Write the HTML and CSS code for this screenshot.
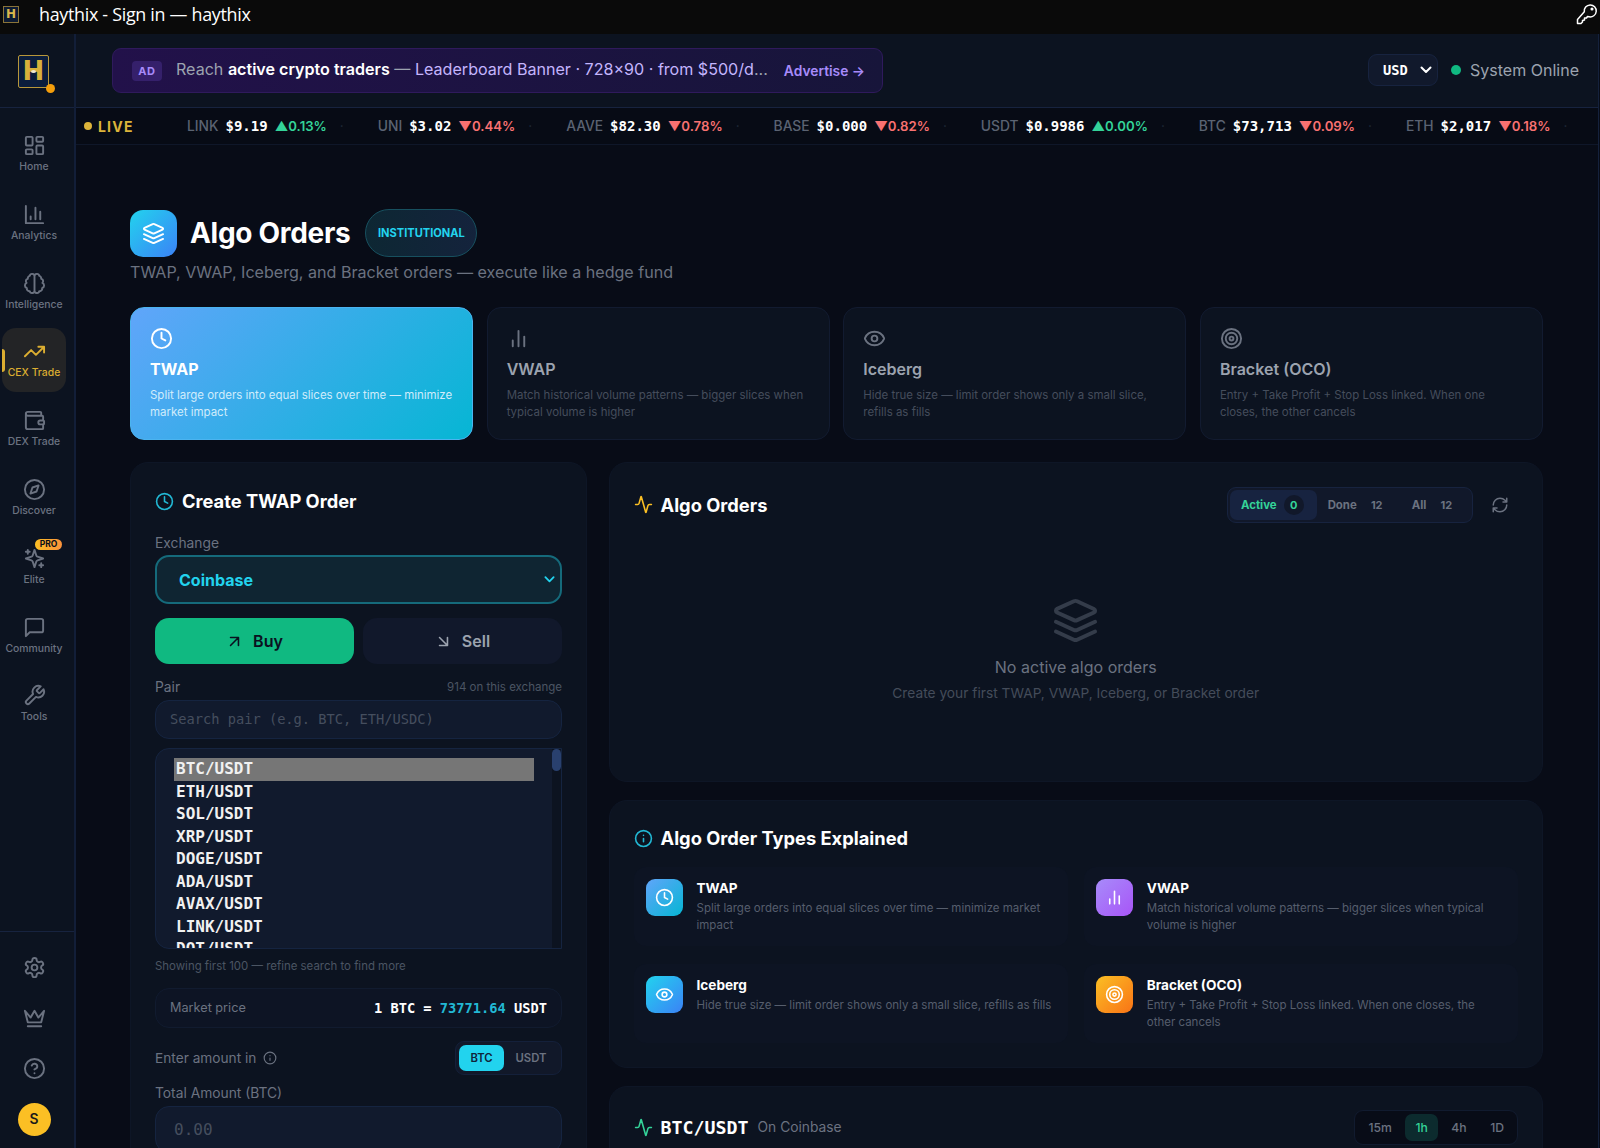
FILE: index.html
```html
<!DOCTYPE html>
<html lang="en">
<head>
  <meta charset="UTF-8">
  <title>haythix - Sign in — haythix</title>
  <link rel="stylesheet" href="styles.css">
</head>
<body>

  <!-- Icon set -->
  <svg class="icon-defs">
    <symbol id="i-home" viewBox="0 0 24 24"><rect x="3" y="3" width="7" height="9" rx="1"/><rect x="14" y="3" width="7" height="5" rx="1"/><rect x="14" y="12" width="7" height="9" rx="1"/><rect x="3" y="16" width="7" height="5" rx="1"/></symbol>
    <symbol id="i-chart" viewBox="0 0 24 24"><path d="M3 3v18h18M18 17V9M13 17V5M8 17v-3"/></symbol>
    <symbol id="i-brain" viewBox="0 0 24 24"><path d="M12 4.5a2.5 2.5 0 0 0-4.96-.46 2.5 2.5 0 0 0-1.98 3 2.5 2.5 0 0 0-1.32 4.24 3 3 0 0 0 .34 5.58 2.5 2.5 0 0 0 2.96 3.08A2.5 2.5 0 0 0 12 19.5a2.5 2.5 0 0 0 4.96.44 2.5 2.5 0 0 0 2.96-3.08 3 3 0 0 0 .34-5.58 2.5 2.5 0 0 0-1.32-4.24 2.5 2.5 0 0 0-1.98-3A2.5 2.5 0 0 0 12 4.5v15"/></symbol>
    <symbol id="i-trend" viewBox="0 0 24 24"><path d="M22 7l-8.5 8.5-5-5L2 17M16 7h6v6"/></symbol>
    <symbol id="i-wallet" viewBox="0 0 24 24"><path d="M19 7V4a1 1 0 0 0-1-1H5a2 2 0 0 0 0 4h15a1 1 0 0 1 1 1v4h-3a2 2 0 0 0 0 4h3a1 1 0 0 0 1-1v-2a1 1 0 0 0-1-1"/><path d="M3 5v14a2 2 0 0 0 2 2h15a1 1 0 0 0 1-1v-4"/></symbol>
    <symbol id="i-compass" viewBox="0 0 24 24"><circle cx="12" cy="12" r="10"/><path d="M16.24 7.76l-2.12 6.36-6.36 2.12 2.12-6.36z"/></symbol>
    <symbol id="i-sparkles" viewBox="0 0 24 24"><path d="m12 3-1.912 5.813a2 2 0 0 1-1.275 1.275L3 12l5.813 1.912a2 2 0 0 1 1.275 1.275L12 21l1.912-5.813a2 2 0 0 1 1.275-1.275L21 12l-5.813-1.912a2 2 0 0 1-1.275-1.275L12 3ZM5 3v4M19 17v4M3 5h4M17 19h4"/></symbol>
    <symbol id="i-message" viewBox="0 0 24 24"><path d="M21 15a2 2 0 0 1-2 2H7l-4 4V5a2 2 0 0 1 2-2h14a2 2 0 0 1 2 2z"/></symbol>
    <symbol id="i-wrench" viewBox="0 0 24 24"><path d="M14.7 6.3a1 1 0 0 0 0 1.4l1.6 1.6a1 1 0 0 0 1.4 0l3.77-3.77a6 6 0 0 1-7.94 7.94l-6.91 6.91a2.12 2.12 0 0 1-3-3l6.91-6.91a6 6 0 0 1 7.94-7.94l-3.76 3.76z"/></symbol>
    <symbol id="i-settings" viewBox="0 0 24 24"><path d="M12.22 2h-.44a2 2 0 0 0-2 2v.18a2 2 0 0 1-1 1.73l-.43.25a2 2 0 0 1-2 0l-.15-.08a2 2 0 0 0-2.73.73l-.22.38a2 2 0 0 0 .73 2.73l.15.1a2 2 0 0 1 1 1.72v.51a2 2 0 0 1-1 1.74l-.15.09a2 2 0 0 0-.73 2.73l.22.38a2 2 0 0 0 2.73.73l.15-.08a2 2 0 0 1 2 0l.43.25a2 2 0 0 1 1 1.73V20a2 2 0 0 0 2 2h.44a2 2 0 0 0 2-2v-.18a2 2 0 0 1 1-1.73l.43-.25a2 2 0 0 1 2 0l.15.08a2 2 0 0 0 2.73-.73l.22-.39a2 2 0 0 0-.73-2.73l-.15-.08a2 2 0 0 1-1-1.74v-.5a2 2 0 0 1 1-1.74l.15-.09a2 2 0 0 0 .73-2.73l-.22-.38a2 2 0 0 0-2.73-.73l-.15.08a2 2 0 0 1-2 0l-.43-.25a2 2 0 0 1-1-1.73V4a2 2 0 0 0-2-2z"/><circle cx="12" cy="12" r="3"/></symbol>
    <symbol id="i-crown" viewBox="0 0 24 24"><path d="m2 4 3 12h14l3-12-6 7-4-7-4 7-6-7zM5 20h14"/></symbol>
    <symbol id="i-help" viewBox="0 0 24 24"><circle cx="12" cy="12" r="10"/><path d="M9.09 9a3 3 0 0 1 5.83 1c0 2-3 3-3 3M12 17h.01"/></symbol>
    <symbol id="i-info" viewBox="0 0 24 24"><circle cx="12" cy="12" r="10"/><path d="M12 16v-4M12 8h.01"/></symbol>
    <symbol id="i-clock" viewBox="0 0 24 24"><circle cx="12" cy="12" r="10"/><path d="M12 6v6l4 2"/></symbol>
    <symbol id="i-bars" viewBox="0 0 24 24"><path d="M18 20V10M12 20V4M6 20v-6"/></symbol>
    <symbol id="i-eye" viewBox="0 0 24 24"><path d="M2.062 12.348a1 1 0 0 1 0-.696 10.75 10.75 0 0 1 19.876 0 1 1 0 0 1 0 .696 10.75 10.75 0 0 1-19.876 0"/><circle cx="12" cy="12" r="3"/></symbol>
    <symbol id="i-target" viewBox="0 0 24 24"><circle cx="12" cy="12" r="10"/><circle cx="12" cy="12" r="6"/><circle cx="12" cy="12" r="2"/></symbol>
    <symbol id="i-layers" viewBox="0 0 24 24"><path d="m12.83 2.18a2 2 0 0 0-1.66 0L2.6 6.08a1 1 0 0 0 0 1.83l8.58 3.91a2 2 0 0 0 1.66 0l8.58-3.9a1 1 0 0 0 0-1.83Z"/><path d="m22 17.65-9.17 4.16a2 2 0 0 1-1.66 0L2 17.65M22 12.65l-9.17 4.16a2 2 0 0 1-1.66 0L2 12.65"/></symbol>
    <symbol id="i-activity" viewBox="0 0 24 24"><path d="M22 12h-2.48a2 2 0 0 0-1.93 1.46l-2.35 8.36a.25.25 0 0 1-.48 0L9.24 2.18a.25.25 0 0 0-.48 0l-2.35 8.36A2 2 0 0 1 4.49 12H2"/></symbol>
    <symbol id="i-refresh" viewBox="0 0 24 24"><path d="M3 12a9 9 0 0 1 9-9 9.75 9.75 0 0 1 6.74 2.74L21 8M21 3v5h-5M21 12a9 9 0 0 1-9 9 9.75 9.75 0 0 1-6.74-2.74L3 16M8 16H3v5"/></symbol>
    <symbol id="i-up" viewBox="0 0 24 24"><path d="M7 7h10v10M7 17 17 7"/></symbol>
    <symbol id="i-down" viewBox="0 0 24 24"><path d="m7 7 10 10M17 7v10H7"/></symbol>
    <symbol id="i-chevron" viewBox="0 0 12 12"><path d="M1.5 3.5 6 8l4.5-4.5"/></symbol>
    <symbol id="i-key" viewBox="0 0 22 22"><path d="M8.3 8.8A6 6 0 1 1 13 13.8L11.500 13.500 10.500 15H8.500V17L6.500 17.500V19L5 20.500H1.500V16.500Z"/><circle cx="16" cy="6" r=".8"/></symbol>
  </svg>

  <!-- Window title -->
  <div class="titlebar">
    <span class="fav">H</span>
    <span class="window-title">haythix - Sign in — haythix</span>
    <svg class="icon key"><use href="#i-key"/></svg>
  </div>

  <div class="shell">

    <aside class="sidebar">
      <div class="brand"><div class="logo">H<i></i></div></div>
      <nav class="menu">
        <a class="menu-item"><svg class="icon"><use href="#i-home"/></svg>Home</a>
        <a class="menu-item"><svg class="icon"><use href="#i-chart"/></svg>Analytics</a>
        <a class="menu-item"><svg class="icon"><use href="#i-brain"/></svg>Intelligence</a>
        <a class="menu-item active"><svg class="icon"><use href="#i-trend"/></svg>CEX Trade</a>
        <a class="menu-item"><svg class="icon"><use href="#i-wallet"/></svg>DEX Trade</a>
        <a class="menu-item"><svg class="icon"><use href="#i-compass"/></svg>Discover</a>
        <a class="menu-item"><svg class="icon"><use href="#i-sparkles"/></svg>Elite<b class="pro">PRO</b></a>
        <a class="menu-item"><svg class="icon"><use href="#i-message"/></svg>Community</a>
        <a class="menu-item"><svg class="icon"><use href="#i-wrench"/></svg>Tools</a>
      </nav>
      <div class="side-bottom">
        <svg class="icon"><use href="#i-settings"/></svg>
        <svg class="icon"><use href="#i-crown"/></svg>
        <svg class="icon"><use href="#i-help"/></svg>
        <div class="avatar">S</div>
      </div>
    </aside>

    <div class="main">
      <header class="topbar">
        <div class="ad">
          <span class="ad-tag">AD</span>
          <span class="ad-text">Reach <b>active crypto traders</b> — <em>Leaderboard Banner · 728×90 · from $500/d</em>...</span>
          <span class="ad-link">Advertise →</span>
        </div>
        <div class="currency">USD<svg class="icon"><use href="#i-chevron"/></svg></div>
        <div class="status"><i></i>System Online</div>
      </header>

      <div class="ticker">
        <div class="live"><i></i>LIVE</div>
        <div class="tick"><span>LINK</span><b>$9.19</b><em class="up">▲0.13%</em></div>
        <div class="tick"><span>UNI</span><b>$3.02</b><em class="down">▼0.44%</em></div>
        <div class="tick"><span>AAVE</span><b>$82.30</b><em class="down">▼0.78%</em></div>
        <div class="tick"><span>BASE</span><b>$0.000</b><em class="down">▼0.82%</em></div>
        <div class="tick"><span>USDT</span><b>$0.9986</b><em class="up">▲0.00%</em></div>
        <div class="tick"><span>BTC</span><b>$73,713</b><em class="down">▼0.09%</em></div>
        <div class="tick"><span>ETH</span><b>$2,017</b><em class="down">▼0.18%</em></div>
      </div>

      <div class="content">
        <div class="page-head">
          <div class="page-icon"><svg class="icon"><use href="#i-layers"/></svg></div>
          <h1>Algo Orders</h1>
          <span class="pill">INSTITUTIONAL</span>
        </div>
        <p class="subtitle">TWAP, VWAP, Iceberg, and Bracket orders — execute like a hedge fund</p>

        <div class="types">
          <div class="type active">
            <svg class="icon"><use href="#i-clock"/></svg>
            <h3>TWAP</h3>
            <p>Split large orders into equal slices over time — minimize market impact</p>
          </div>
          <div class="type">
            <svg class="icon"><use href="#i-bars"/></svg>
            <h3>VWAP</h3>
            <p>Match historical volume patterns — bigger slices when typical volume is higher</p>
          </div>
          <div class="type">
            <svg class="icon"><use href="#i-eye"/></svg>
            <h3>Iceberg</h3>
            <p>Hide true size — limit order shows only a small slice, refills as fills</p>
          </div>
          <div class="type">
            <svg class="icon"><use href="#i-target"/></svg>
            <h3>Bracket (OCO)</h3>
            <p>Entry + Take Profit + Stop Loss linked. When one closes, the other cancels</p>
          </div>
        </div>

        <div class="columns">
          <!-- Order form -->
          <section class="card form">
            <h2><svg class="icon cyan"><use href="#i-clock"/></svg>Create TWAP Order</h2>
            <div class="label">Exchange</div>
            <div class="exchange">Coinbase<svg class="icon"><use href="#i-chevron"/></svg></div>
            <div class="sides">
              <div class="side buy"><svg class="icon"><use href="#i-up"/></svg>Buy</div>
              <div class="side"><svg class="icon"><use href="#i-down"/></svg>Sell</div>
            </div>
            <div class="label split">Pair<small>914 on this exchange</small></div>
            <div class="search">Search pair (e.g. BTC, ETH/USDC)</div>
            <div class="pairs">
              <ul>
                <li class="selected">BTC/USDT</li>
                <li>ETH/USDT</li>
                <li>SOL/USDT</li>
                <li>XRP/USDT</li>
                <li>DOGE/USDT</li>
                <li>ADA/USDT</li>
                <li>AVAX/USDT</li>
                <li>LINK/USDT</li>
                <li>DOT/USDT</li>
              </ul>
              <div class="track"><i></i></div>
            </div>
            <div class="hint">Showing first 100 — refine search to find more</div>
            <div class="market"><span>Market price</span><b>1 BTC = <em>73771.64</em> USDT</b></div>
            <div class="amount-in">
              <span>Enter amount in</span><svg class="icon"><use href="#i-info"/></svg>
              <div class="unit"><b class="on">BTC</b><b>USDT</b></div>
            </div>
            <div class="label total">Total Amount (BTC)</div>
            <div class="total-input">0.00</div>
          </section>

          <div class="right">
            <section class="card orders">
              <div class="orders-head">
                <h2><svg class="icon gold"><use href="#i-activity"/></svg>Algo Orders</h2>
                <div class="tabs">
                  <span class="tab on">Active<i>0</i></span>
                  <span class="tab">Done<i>12</i></span>
                  <span class="tab">All<i>12</i></span>
                </div>
                <svg class="icon refresh"><use href="#i-refresh"/></svg>
              </div>
              <div class="empty">
                <svg class="icon"><use href="#i-layers"/></svg>
                <p>No active algo orders</p>
                <small>Create your first TWAP, VWAP, Iceberg, or Bracket order</small>
              </div>
            </section>

            <section class="card explained">
              <h2><svg class="icon cyan"><use href="#i-info"/></svg>Algo Order Types Explained</h2>
              <div class="explain-grid">
                <div class="explain">
                  <div class="tile blue"><svg class="icon"><use href="#i-clock"/></svg></div>
                  <div><h4>TWAP</h4><p>Split large orders into equal slices over time — minimize market impact</p></div>
                </div>
                <div class="explain">
                  <div class="tile purple"><svg class="icon"><use href="#i-bars"/></svg></div>
                  <div><h4>VWAP</h4><p>Match historical volume patterns — bigger slices when typical volume is higher</p></div>
                </div>
                <div class="explain">
                  <div class="tile sky"><svg class="icon"><use href="#i-eye"/></svg></div>
                  <div><h4>Iceberg</h4><p>Hide true size — limit order shows only a small slice, refills as fills</p></div>
                </div>
                <div class="explain">
                  <div class="tile orange"><svg class="icon"><use href="#i-target"/></svg></div>
                  <div><h4>Bracket (OCO)</h4><p>Entry + Take Profit + Stop Loss linked. When one closes, the other cancels</p></div>
                </div>
              </div>
            </section>

            <section class="card chart">
              <svg class="icon green"><use href="#i-activity"/></svg>
              <b class="symbol">BTC/USDT</b>
              <span class="venue">On Coinbase</span>
              <div class="frames"><span>15m</span><span class="on">1h</span><span>4h</span><span>1D</span></div>
            </section>
          </div>
        </div>
      </div>
    </div>
  </div>

</body>
</html>
```
FILE: styles.css
```css
* {
  box-sizing: border-box;
}

body {
  margin: 0;
  height: 1148px;
  overflow: hidden;
  background: #080c17;
  color: #fff;
  font-family: Inter, "Liberation Sans", sans-serif;
  font-size: 13.8px;
}

h1, h2, h3, h4, p, ul {
  margin: 0;
  padding: 0;
}

em, i {
  font-style: normal;
}

.icon-defs {
  display: none;
}

.icon {
  display: block;
  flex: none;
  width: 23px;
  height: 23px;
  fill: none;
  stroke: currentColor;
  stroke-width: 2;
  stroke-linecap: round;
  stroke-linejoin: round;
}

.cyan { color: #22b8d4; }
.gold { color: #fbbf24; }
.green { color: #34d399; }

/* Window title */
.titlebar {
  display: flex;
  align-items: center;
  height: 34px;
  padding: 0 2px 6px 3px;
  background: #0a0a0a;
}

.fav {
  width: 16px;
  height: 17px;
  border: 1px solid #8a7338;
  background: #0c1a33;
  color: #d9b84c;
  font: bold 12px/15px "DejaVu Sans", sans-serif;
  text-align: center;
}

.window-title {
  flex: 1;
  margin-left: 20px;
  font: 17.9px/26px "Open Sans", sans-serif;
  letter-spacing: -0.3px;
}

.key {
  width: 22px;
  height: 22px;
  stroke-width: 1.5;
}

.shell {
  display: flex;
  height: 1114px;
  border-right: 1px solid #14213c;
  margin-right: 1px;
  overflow: hidden;
}

/* Sidebar */
.sidebar {
  display: flex;
  flex-direction: column;
  flex: none;
  width: 76px;
  background: #0c1320;
  border-right: 2px solid #121e38;
  color: #6b7280;
}

.brand {
  height: 74px;
  padding: 21px 0 0 18px;
  border-bottom: 1px solid #17233f;
}

.logo {
  position: relative;
  width: 31px;
  height: 33px;
  border: 1px solid #b8973a;
  border-radius: 2px;
  background: #0b1d3c;
  color: #d9b13b;
  font: bold 26px/31px "DejaVu Sans", sans-serif;
  text-align: center;
}

.logo::after {
  content: "";
  position: absolute;
  left: 12px;
  top: 14px;
  width: 5px;
  height: 3px;
  border-radius: 50%;
  background: #f3ead0;
}

.logo i {
  position: absolute;
  right: -7px;
  bottom: -6px;
  width: 9px;
  height: 9px;
  border-radius: 50%;
  background: #f59e0b;
}

.menu {
  flex: 1;
  padding: 14px 0 0 2px;
}

.menu-item {
  position: relative;
  display: flex;
  flex-direction: column;
  align-items: center;
  gap: 3px;
  width: 64px;
  height: 64px;
  margin-bottom: 4.8px;
  padding: 12px 0 0;
  border-radius: 14px;
  font-size: 10.4px;
  font-weight: 500;
  line-height: 13px;
  white-space: nowrap;
}

.menu-item.active {
  background: #232426;
  color: #dcae31;
}

.menu-item.active::before {
  content: "";
  position: absolute;
  left: 0;
  top: 21px;
  width: 3px;
  height: 23px;
  border-radius: 0 3px 3px 0;
  background: #dcae31;
}

.pro {
  position: absolute;
  left: 33px;
  top: 4px;
  width: 27px;
  height: 11px;
  border-radius: 6px;
  background: linear-gradient(90deg, #fbbf24, #fb923c);
  color: #0a0e1a;
  font-size: 8.5px;
  line-height: 11px;
  text-align: center;
}

.side-bottom {
  display: flex;
  flex-direction: column;
  align-items: center;
  gap: 27.7px;
  height: 217px;
  padding: 24px 6px 0 0;
  border-top: 1px solid #17233f;
}

.avatar {
  width: 33px;
  height: 33px;
  margin-top: -5px;
  border-radius: 50%;
  background: #fbbf24;
  color: #1a1a1a;
  font-weight: 600;
  line-height: 33px;
  text-align: center;
}

/* Top bar */
.main {
  flex: 1;
  min-width: 0;
  overflow: hidden;
}

.topbar {
  display: flex;
  align-items: center;
  height: 74px;
  padding: 0 18px 0 36px;
  background: #0c1320;
  border-bottom: 1px solid #17233f;
}

.ad {
  display: flex;
  align-items: center;
  width: 771px;
  height: 45px;
  padding: 0 17px 3px 19px;
  border: 1px solid #2f1a5c;
  border-radius: 9px;
  background: linear-gradient(90deg, #22114a, #17153a);
}

.ad-tag {
  width: 30px;
  height: 20px;
  margin-top: 3px;
  border-radius: 4px;
  background: #35206b;
  color: #a78bfa;
  font-size: 11px;
  font-weight: 700;
  letter-spacing: 0.6px;
  line-height: 20px;
  text-align: center;
}

.ad-text {
  flex: 1;
  margin-left: 14px;
  color: #9ca3af;
  font-size: 16.08px;
  white-space: nowrap;
}

.ad-text b {
  color: #fff;
  font-weight: 600;
}

.ad-text em {
  color: #c4b5fd;
}

.ad-link {
  margin-top: 4px;
  color: #a78bfa;
  font-weight: 600;
}

.currency {
  display: flex;
  align-items: center;
  justify-content: space-between;
  width: 70px;
  height: 32px;
  margin: 0 0 1px auto;
  padding: 0 5px 0 14px;
  border: 1px solid #17233f;
  border-radius: 9px;
  background: #11192c;
  font: bold 13.7px "DejaVu Sans Mono", monospace;
}

.currency .icon {
  width: 12px;
  height: 12px;
}

.status {
  display: flex;
  align-items: center;
  gap: 9px;
  margin: 0 1px 2px 13px;
  color: #9ca3af;
  font-size: 16.05px;
}

.status i {
  width: 10px;
  height: 10px;
  border-radius: 50%;
  background: #10b981;
}

/* Ticker */
.ticker {
  display: flex;
  align-items: center;
  height: 37px;
  padding-left: 8px;
  border-bottom: 1px solid #0f1729;
  background: #070b15;
  white-space: nowrap;
}

.live {
  display: flex;
  flex: none;
  align-items: center;
  gap: 6px;
  width: 103px;
  color: #dcb43a;
  font-size: 14px;
  font-weight: 700;
  letter-spacing: 1.2px;
}

.live i {
  width: 8px;
  height: 8px;
  border-radius: 50%;
  background: #dcb43a;
}

.tick {
  display: flex;
  flex: none;
  align-items: center;
  gap: 7px;
}

.tick::after {
  content: "·";
  width: 37.9px;
  margin-left: 6px;
  color: #1f2937;
}

.tick span {
  color: #5b6372;
  font-weight: 500;
}

.tick b {
  font: bold 14px "DejaVu Sans Mono", monospace;
}

.tick em {
  font-size: 13.2px;
  font-weight: 600;
}

.up { color: #34d399; }
.down { color: #f87171; }

/* Page head */
.content {
  padding: 64px 55px 0 54px;
}

.page-head {
  display: flex;
  align-items: center;
  height: 48px;
}

.page-icon {
  display: grid;
  place-items: center;
  width: 47px;
  height: 47px;
  border-radius: 13px;
  background: linear-gradient(135deg, #22d3ee, #3b82f6);
}

h1 {
  margin: 0 15px 0 13px;
  font-size: 28px;
  font-weight: 700;
  letter-spacing: -0.3px;
}

.pill {
  width: 112px;
  height: 48px;
  border: 1px solid #17505f;
  border-radius: 24px;
  background: linear-gradient(90deg, #0d2733, #14233c);
  color: #22d3ee;
  font-size: 11.1px;
  font-weight: 700;
  line-height: 47px;
  text-align: center;
}

.subtitle {
  margin-top: 3px;
  color: #6b7280;
  font-size: 16.08px;
  line-height: 24px;
}

/* Order types */
.types {
  display: grid;
  grid-template-columns: repeat(4, 1fr);
  gap: 13.5px;
  margin-top: 23px;
}

.type {
  height: 133px;
  padding: 19px 19px 0;
  border: 1px solid #121b30;
  border-radius: 14px;
  background: #0c1320;
  color: #6b7280;
}

.type h3 {
  margin-top: 8px;
  color: #9ca3af;
  font-size: 16.05px;
  font-weight: 600;
  line-height: 23px;
}

.type p {
  margin-top: 6px;
  color: #454d5c;
  font-size: 11.47px;
  line-height: 17.4px;
}

.type.active {
  border-color: #4bb4f0;
  background: linear-gradient(135deg, #60a5fa, #06b6d4);
  color: #fff;
}

.type.active h3 {
  color: #fff;
  font-weight: 700;
}

.type.active p {
  color: #d0ecfb;
}

/* Columns */
.columns {
  display: flex;
  gap: 21.5px;
  margin-top: 22px;
}

.card {
  border: 1px solid #0e1626;
  border-radius: 18px;
  background: #0c1320;
}

h2 {
  display: flex;
  align-items: center;
  gap: 8px;
  font-size: 18.3px;
  font-weight: 700;
  line-height: 26px;
}

h2 .icon {
  width: 19px;
  height: 19px;
}

.form {
  width: 457px;
  height: 720px;
  padding: 25px 24px 0;
}

.label {
  margin-top: 19px;
  color: #6b7280;
  line-height: 20px;
}

.split {
  display: flex;
  justify-content: space-between;
  margin-top: 13px;
}

.split small {
  color: #4b5563;
  font-size: 11.5px;
}

.exchange {
  display: flex;
  align-items: center;
  justify-content: space-between;
  height: 49px;
  margin-top: 2px;
  padding: 0 5px 0 22px;
  border: 2px solid #156a7b;
  border-radius: 14px;
  background: #0f2532;
  color: #22d3ee;
  font-size: 16.05px;
  font-weight: 700;
}

.exchange .icon {
  width: 11px;
  height: 11px;
}

.sides {
  display: flex;
  gap: 9px;
  margin-top: 14px;
}

.side {
  display: flex;
  flex: 1;
  align-items: center;
  justify-content: center;
  gap: 9px;
  height: 46px;
  padding-right: 1px;
  border-radius: 14px;
  background: #11182b;
  color: #9ca3af;
  font-size: 16.05px;
  font-weight: 600;
}

.side .icon {
  width: 19px;
  height: 19px;
}

.side.buy {
  background: #10b981;
  color: #0a1020;
}

.search,
.total-input {
  height: 39px;
  margin-top: 3px;
  padding: 0 14px;
  border: 1px solid #152440;
  border-radius: 14px;
  background: #111a2d;
  color: #454e5e;
  font: 13.7px/37px "DejaVu Sans Mono", monospace;
}

.pairs {
  display: flex;
  height: 201px;
  margin-top: 9px;
  border: 1px solid #152440;
  border-radius: 14px 0 0 14px;
  background: #111a2d;
  overflow: hidden;
}

.pairs ul {
  flex: 1;
  padding: 9px 18px 0 18px;
  list-style: none;
  font: bold 16px/22.6px "DejaVu Sans Mono", monospace;
}

.pairs li {
  height: 22.5px;
  padding-left: 2px;
  color: #f1f1f1;
}

.pairs .selected {
  background: #767676;
}

.track {
  width: 9px;
  background: #0c1320;
}

.track i {
  display: block;
  height: 22px;
  border-radius: 5px;
  background: #29406e;
}

.hint {
  margin-top: 8px;
  color: #4b5563;
  font-size: 11.45px;
  line-height: 18px;
}

.market {
  display: flex;
  align-items: center;
  justify-content: space-between;
  height: 40px;
  margin-top: 13px;
  padding: 0 14px 1px;
  border: 1px solid #111b2f;
  border-radius: 14px;
  background: #0d1424;
  color: #6b7280;
  font-size: 12.7px;
}

.market b {
  color: #fff;
  font: bold 13.7px "DejaVu Sans Mono", monospace;
}

.market em {
  color: #22b8d4;
}

.amount-in {
  display: flex;
  align-items: center;
  gap: 7px;
  height: 34px;
  margin-top: 13px;
  color: #6b7280;
  font-size: 13.7px;
}

.amount-in .icon {
  width: 14px;
  height: 14px;
}

.unit {
  display: flex;
  width: 107px;
  height: 34px;
  margin-left: auto;
  padding: 3px;
  border: 1px solid #14203a;
  border-radius: 9px;
  background: #111829;
}

.unit b {
  flex: 1.2;
  border-radius: 7px;
  font-size: 11.3px;
  font-weight: 600;
  line-height: 26px;
  text-align: center;
}

.unit .on {
  flex: 1;
  background: #22d3ee;
  color: #10243a;
}

.label.total {
  margin-top: 8px;
}

.total-input {
  height: 47px;
  padding: 0 18px;
  font-size: 16px;
  line-height: 45px;
}

/* Orders panel */
.right {
  flex: 1;
  min-width: 0;
}

.orders {
  height: 320px;
  padding: 23px 24px;
}

.orders-head {
  display: flex;
  align-items: center;
  height: 37px;
}

.tabs {
  display: flex;
  width: 246px;
  height: 36px;
  margin-left: auto;
  padding: 2px;
  border: 1px solid #17233f;
  border-radius: 9px;
  background: #11182a;
}

.tab {
  display: flex;
  align-items: center;
  gap: 7px;
  padding: 0 11px;
  border-radius: 7px;
  color: #6b7280;
  font-size: 11.4px;
  font-weight: 700;
}

.tab i {
  width: 26px;
  height: 20px;
  font-size: 11px;
  line-height: 20px;
  text-align: center;
}

.tab.on {
  padding-right: 13px;
  background: #172340;
  color: #34d399;
}

.tab.on i {
  width: 20px;
  border-radius: 50%;
  background: #11182a;
}

.refresh {
  width: 18px;
  height: 18px;
  margin: 0 9px 0 18px;
  color: #6b7280;
}

.empty {
  display: flex;
  flex-direction: column;
  align-items: center;
  padding-top: 74px;
  color: #6b7280;
}

.empty .icon {
  width: 47px;
  height: 47px;
  color: #343c4a;
}

.empty p {
  margin-top: 11px;
  font-size: 16.05px;
  line-height: 24px;
}

.empty small {
  margin-top: 4px;
  color: #444c5a;
  font-size: 13.75px;
  line-height: 20px;
}

/* Explained panel */
.explained {
  height: 268px;
  margin-top: 18px;
  padding: 24px;
}

.explain-grid {
  display: grid;
  grid-template-columns: 1fr 1fr;
  gap: 18px 16px;
  margin-top: 16px;
}

.explain {
  display: flex;
  gap: 14px;
  height: 79px;
  padding: 12px 5px 0 12px;
  border-radius: 12px;
  background: #0d1423;
}

.explain:nth-child(even) {
  padding-right: 14px;
}

.tile {
  display: grid;
  place-items: center;
  flex: none;
  width: 37px;
  height: 37px;
  border-radius: 9px;
}

.tile .icon {
  width: 19px;
  height: 19px;
}

.blue { background: linear-gradient(135deg, #60a5fa, #06b6d4); }
.purple { background: linear-gradient(135deg, #a78bfa, #a855f7); }
.sky { background: linear-gradient(135deg, #22d3ee, #3b82f6); }
.orange { background: linear-gradient(135deg, #fbbf24, #f97316); }

h4 {
  margin-top: -1px;
  font-size: 13.6px;
  font-weight: 700;
  line-height: 20px;
}

.explain p {
  margin-top: 2px;
  color: #565e6d;
  font-size: 11.5px;
  line-height: 17px;
}

/* Chart panel */
.chart {
  display: flex;
  align-items: center;
  height: 160px;
  margin-top: 18px;
  padding: 0 24px 78px 24px;
}

.chart .icon {
  width: 19px;
  height: 19px;
}

.symbol {
  margin: 0 9px 0 8px;
  font: bold 18.3px "DejaVu Sans Mono", monospace;
}

.venue {
  color: #6b7280;
}

.frames {
  display: flex;
  gap: 3.5px;
  height: 35px;
  margin-left: auto;
  padding: 3px;
  border: 1px solid #111b2f;
  border-radius: 9px;
  background: #080c17;
}

.frames span {
  padding: 0 10px;
  border-radius: 7px;
  color: #6b7280;
  font-size: 12.2px;
  font-weight: 500;
  line-height: 28px;
}

.frames .on {
  background: #0c2b2e;
  color: #34d399;
}
```
